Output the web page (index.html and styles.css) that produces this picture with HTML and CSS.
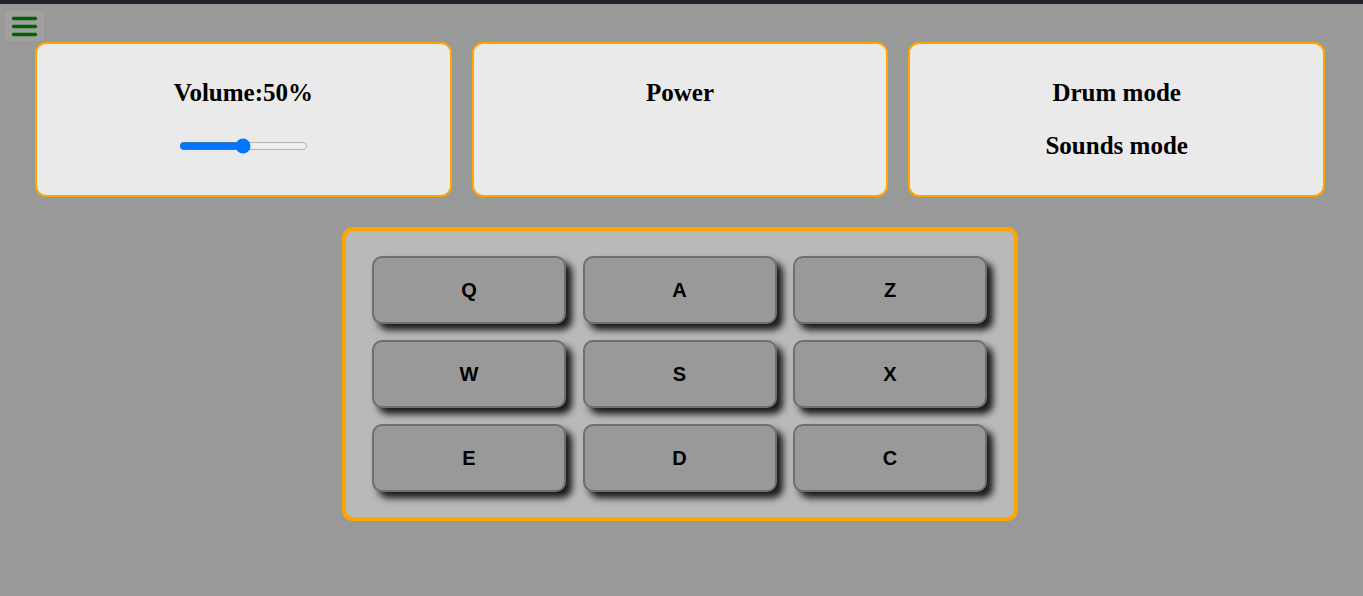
FILE: index.html
```html
<!DOCTYPE html>
<html lang="en">
<head>
<meta charset="utf-8">
<title>Drum Machine</title>
<link rel="stylesheet" href="styles.css">
</head>
<body>
<div class="topbar"></div>
<button class="menu-btn" aria-label="Menu">
  <svg width="39" height="30" viewBox="0 0 39 30">
    <line x1="8.5" y1="7.5" x2="30.5" y2="7.5" />
    <line x1="8.5" y1="15.5" x2="30.5" y2="15.5" />
    <line x1="8.5" y1="23.5" x2="30.5" y2="23.5" />
  </svg>
</button>
<main class="app">
  <section class="controls">
    <div class="panel">
      <h2 class="title">Volume:50%</h2>
      <input class="volume" type="range" min="0" max="100" value="50">
    </div>
    <div class="panel">
      <h2 class="title">Power</h2>
    </div>
    <div class="panel">
      <h2 class="title">Drum mode</h2>
      <h2 class="title sub">Sounds mode</h2>
    </div>
  </section>
  <section class="pad-bank">
    <div class="pad">Q</div>
    <div class="pad">A</div>
    <div class="pad">Z</div>
    <div class="pad">W</div>
    <div class="pad">S</div>
    <div class="pad">X</div>
    <div class="pad">E</div>
    <div class="pad">D</div>
    <div class="pad">C</div>
  </section>
</main>
</body>
</html>
```
FILE: styles.css
```css
html, body {
  margin: 0;
  padding: 0;
}
body {
  background: #999999;
  min-height: 596px;
  font-family: "Liberation Serif", "Times New Roman", serif;
}
.topbar {
  height: 4px;
  background: #22232b;
}
.menu-btn {
  position: absolute;
  left: 5px;
  top: 11px;
  width: 39px;
  height: 30px;
  padding: 0;
  border: none;
  background: #a0a0a0;
  display: block;
}
.menu-btn svg {
  display: block;
}
.menu-btn line {
  stroke: #006400;
  stroke-width: 3.4;
  stroke-linecap: round;
}
.app {
  padding-top: 38px;
}
.controls {
  display: flex;
  gap: 20px;
  padding: 0 38px 0 35px;
}
.panel {
  flex: 1;
  height: 155px;
  box-sizing: border-box;
  border: 2px solid #ffa500;
  border-radius: 11px;
  background: #eaeaea;
  display: flex;
  flex-direction: column;
  align-items: center;
  padding-top: 35px;
}
.title {
  margin: 0;
  font-size: 25px;
  line-height: 28px;
  font-weight: bold;
  color: #000;
}
.sub {
  margin-top: 25px;
}
.volume {
  margin: 31px 0 0;
  width: 129px;
  height: 16px;
}
.pad-bank {
  width: 676px;
  box-sizing: border-box;
  margin: 30px 0 0 calc(50% - 339.5px);
  border: 4px solid #ffa500;
  border-radius: 11px;
  background: #b9b9b9;
  padding: 25px 26px 25px 26px;
  display: grid;
  grid-template-columns: repeat(3, 194px);
  grid-auto-rows: 68px;
  column-gap: 16.5px;
  row-gap: 16px;
}
.pad {
  box-sizing: border-box;
  border: 2px solid #6f6f6f;
  border-radius: 10px;
  background: #999999;
  box-shadow: 6px 6px 7px #181818;
  display: flex;
  align-items: center;
  justify-content: center;
  font-family: "Liberation Sans", Arial, sans-serif;
  font-weight: bold;
  font-size: 20px;
  color: #000;
}
```
